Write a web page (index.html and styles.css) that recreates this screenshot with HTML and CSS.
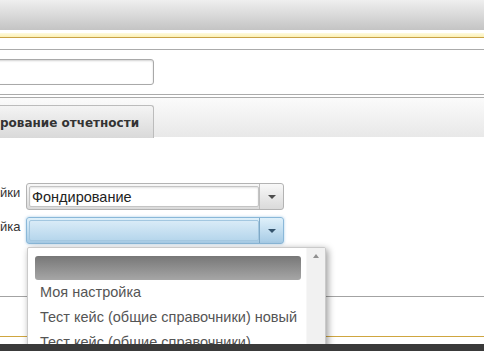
FILE: index.html
```html
<!DOCTYPE html>
<html lang="ru">
<head>
<meta charset="utf-8">
<title>Настройки</title>
<link rel="stylesheet" href="styles.css">
</head>
<body>
<div class="page">
  <div class="header"></div>
  <div class="band"></div>
  <div class="search">
    <div class="search-input"></div>
  </div>
  <div class="tabbar">
    <div class="tab">рование отчетности</div>
  </div>
  <div class="content">
    <div class="form">
      <div class="row">
        <div class="label">йки</div>
        <div class="combo">
          <div class="field">Фондирование</div>
          <div class="trigger"><span class="arrow"></span></div>
        </div>
      </div>
      <div class="row">
        <div class="label">йка</div>
        <div class="combo focus">
          <div class="field"></div>
          <div class="trigger"><span class="arrow"></span></div>
        </div>
      </div>
    </div>
  </div>
  <div class="lower"></div>
  <div class="gap"></div>
  <div class="darkbar"></div>

  <div class="dropdown">
    <div class="list">
      <div class="item selected"></div>
      <div class="item">Моя настройка</div>
      <div class="item">Тест кейс (общие справочники) новый</div>
      <div class="item">Тест кейс (общие справочники)</div>
    </div>
    <div class="scroll"><span class="up"></span></div>
  </div>
</div>
</body>
</html>
```
FILE: styles.css
```css
html, body {
  margin: 0;
  padding: 0;
  background: #fff;
}
.page {
  position: relative;
  width: 484px;
  height: 351px;
  overflow: hidden;
  font-family: "Liberation Sans", Arial, sans-serif;
  color: #333;
}
.header {
  height: 30px;
  background: linear-gradient(#efefef, #c4c4c4);
}
.band {
  height: 19px;
  border-bottom: 1px solid #ababab;
  background: linear-gradient(to bottom,
    #fff 0, #fff 3px,
    #fefae0 3px, #fbf0b4 7px,
    #c9a245 7px, #c9a245 8px,
    #fff 8px, #fff 100%);
}
.search {
  height: 45px;
  padding-top: 9px;
  box-sizing: border-box;
  border-bottom: 1px solid #ababab;
}
.search-input {
  margin-left: -10px;
  width: 164px;
  height: 26px;
  box-sizing: border-box;
  border: 1px solid #a9a9a9;
  border-radius: 3px;
  background: #fff;
  box-shadow: inset 0 1px 2px rgba(0,0,0,0.18);
}
.tabbar {
  margin-top: 2px;
  border-top: 1px solid #ababab;
  height: 40px;
  padding-top: 7px;
  box-sizing: border-box;
  background: linear-gradient(#fbfbfb, #e8e8e8);
}
.tab {
  margin-left: -10px;
  width: 164px;
  height: 33px;
  box-sizing: border-box;
  border: 1px solid #bcbcbc;
  border-bottom: none;
  border-radius: 0 3px 0 0;
  background: linear-gradient(#f4f4f4, #d9d9d9);
  font-family: "DejaVu Sans", Verdana, sans-serif;
  font-weight: bold;
  font-size: 12px;
  color: #333;
  padding-left: 9px;
  padding-top: 2px;
  line-height: 31px;
  white-space: nowrap;
  overflow: hidden;
}
.content {
  border-bottom: 1px solid #a3a3a3;
  padding-top: 46px;
  height: 113px;
}
.form {
  display: flex;
  flex-direction: column;
  gap: 7px;
}
.row {
  display: flex;
  align-items: flex-start;
  gap: 6px;
}
.label {
  width: 20px;
  padding-top: 2px;
  text-align: right;
  font-size: 13px;
  line-height: 16px;
  color: #333;
  white-space: nowrap;
}
.combo {
  display: flex;
  width: 258px;
  height: 27px;
  box-sizing: border-box;
  border: 1px solid #b3b3b3;
  border-radius: 3px;
  background: linear-gradient(#f8f8f8, #dadada);
}
.field {
  flex: 1;
  margin: 2px 0 2px 2px;
  background: #fff;
  border: 1px solid #c4c4c4;
  border-radius: 2px;
  box-shadow: inset 0 1px 2px rgba(0,0,0,0.12);
  font-size: 14.5px;
  color: #222;
  padding-left: 2px;
  line-height: 20px;
  white-space: nowrap;
}
.trigger {
  width: 23px;
  border-left: 1px solid #bdbdbd;
  display: flex;
  align-items: center;
  justify-content: center;
}
.arrow {
  width: 0;
  height: 0;
  border-left: 4px solid transparent;
  border-right: 4px solid transparent;
  border-top: 4px solid #4d4d4d;
}
.combo.focus {
  border-color: #8ab8d9;
  background: linear-gradient(#dff0fa, #a6cbe5);
  box-shadow: 0 0 3px rgba(110,170,215,0.6);
}
.combo.focus .field {
  background: linear-gradient(#d9ebf7, #b6d6ec);
  border-color: #a3c7e0;
  box-shadow: none;
}
.combo.focus .trigger {
  border-left-color: #7fa9c7;
}
.combo.focus .arrow {
  border-top-color: #34536c;
}
.lower {
  height: 39px;
  border-bottom: 1px solid #cfa640;
}
.gap {
  height: 7px;
}
.darkbar {
  position: relative;
  z-index: 2;
  height: 10px;
  background: #3a3a3a;
}
.dropdown {
  position: absolute;
  z-index: 1;
  left: 27px;
  top: 247px;
  width: 299px;
  height: 120px;
  box-sizing: border-box;
  border: 1px solid #cacaca;
  border-radius: 2px;
  background: #fff;
  box-shadow: 2px 2px 7px rgba(0,0,0,0.4);
  display: flex;
}
.list {
  flex: 1;
  padding: 8px 5px 0 7px;
}
.item {
  height: 25px;
  line-height: 25px;
  padding-left: 5px;
  font-size: 14.5px;
  color: #555;
  white-space: nowrap;
}
.item.selected {
  height: 24px;
  border-radius: 3px;
  background: linear-gradient(#777, #a6a6a6);
}
.scroll {
  width: 18px;
  background: #f1f1f1;
  border-left: 1px solid #f7f7f7;
  position: relative;
}
.up {
  position: absolute;
  left: 6px;
  top: 6px;
  width: 0;
  height: 0;
  border-left: 3px solid transparent;
  border-right: 3px solid transparent;
  border-bottom: 4px solid #909090;
}
```
